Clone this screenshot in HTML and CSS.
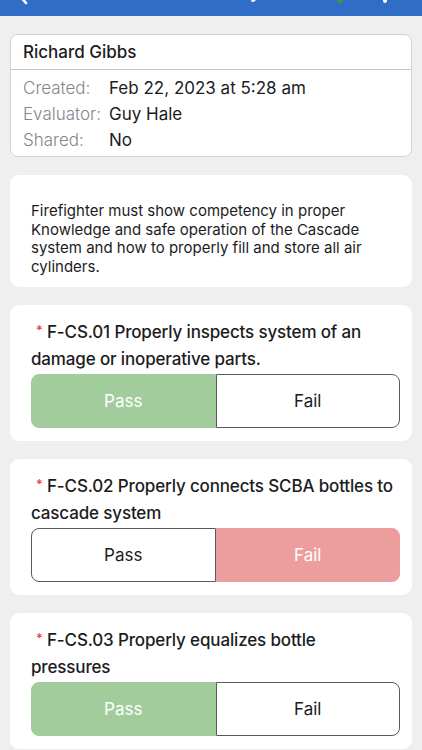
FILE: index.html
```html
<!DOCTYPE html>
<html lang="en">
<head>
<meta charset="utf-8">
<title>Evaluation</title>
<link rel="stylesheet" href="styles.css">
</head>
<body>
<header class="topbar">
  <div class="topbar-inner">
    <svg class="back" width="12" height="22" viewBox="0 0 12 22"><path d="M10 2 L2 11 L10 20" fill="none" stroke="#fff" stroke-width="2.6" stroke-linecap="round" stroke-linejoin="round"/></svg>
    <span class="title">Survey</span>
    <svg class="check" width="16" height="18" viewBox="0 0 16 18"><path d="M8 1 L15 9 L8 17 L1 9 Z" fill="#3f9a3a"/></svg>
    <svg class="more" width="6" height="22" viewBox="0 0 6 22"><circle cx="3" cy="3" r="2" fill="#fff"/><circle cx="3" cy="11" r="2" fill="#fff"/><circle cx="3" cy="19" r="2" fill="#fff"/></svg>
  </div>
</header>

<main class="content">
  <section class="card info-card">
    <div class="info-name">Richard Gibbs</div>
    <div class="info-rows">
      <div class="info-row"><span class="info-label">Created:</span><span class="info-value">Feb 22, 2023 at 5:28 am</span></div>
      <div class="info-row"><span class="info-label">Evaluator:</span><span class="info-value">Guy Hale</span></div>
      <div class="info-row"><span class="info-label">Shared:</span><span class="info-value">No</span></div>
    </div>
  </section>

  <section class="card desc-card">
    <p class="desc">Firefighter must show competency in proper Knowledge and safe operation of the Cascade system and how to properly fill and store all air cylinders.</p>
  </section>

  <section class="card q-card">
    <p class="question"><span class="req">*</span>F-CS.01 Properly inspects system of an damage or inoperative parts.</p>
    <div class="segment">
      <div class="seg seg-pass is-selected">Pass</div>
      <div class="seg seg-fail">Fail</div>
    </div>
  </section>

  <section class="card q-card">
    <p class="question"><span class="req">*</span>F-CS.02 Properly connects SCBA bottles to cascade system</p>
    <div class="segment">
      <div class="seg seg-pass">Pass</div>
      <div class="seg seg-fail is-selected">Fail</div>
    </div>
  </section>

  <section class="card q-card">
    <p class="question"><span class="req">*</span>F-CS.03 Properly equalizes bottle pressures</p>
    <div class="segment">
      <div class="seg seg-pass is-selected">Pass</div>
      <div class="seg seg-fail">Fail</div>
    </div>
  </section>
</main>
<div class="bottombar"></div>
</body>
</html>
```

FILE: styles.css
```css
* { box-sizing: border-box; }

html, body {
  margin: 0;
  padding: 0;
  background: #efeff0;
  font-family: Inter, "Noto Sans", "Liberation Sans", sans-serif;
  color: #1c1c1e;
}

body { overflow: hidden; }

.topbar {
  height: 16px;
  background: #2f6dc6;
  overflow: hidden;
}

.topbar-inner {
  height: 16px;
  display: flex;
  align-items: flex-end;
  padding: 0 34px 11px 16px;
}

.back { flex: none; }

.title {
  flex: none;
  margin-left: 174px;
  color: #fff;
  font-size: 17px;
  font-weight: 600;
  line-height: 20px;
  transform: translateY(-3px);
}

.check {
  flex: none;
  margin-left: auto;
}

.more {
  flex: none;
  margin-left: 34px;
  transform: translateY(-1px);
}

.content {
  display: flex;
  flex-direction: column;
  gap: 18px;
  padding: 18px 10px 0;
}

.card {
  background: #fff;
  border-radius: 9px;
}

.info-card {
  border: 1px solid #d3d3d6;
  border-radius: 8px;
}

.info-name {
  height: 35px;
  display: flex;
  align-items: center;
  padding: 0 12px;
  font-size: 17px;
  font-weight: 500;
  border-bottom: 1px solid #c4c4c6;
}

.info-rows {
  padding: 5px 12px 3px;
}

.info-row {
  display: flex;
  height: 26px;
  align-items: center;
  font-size: 17px;
}

.info-label {
  width: 86px;
  flex: none;
  color: #86868a;
  font-weight: 300;
}

.info-value {
  color: #1c1c1e;
  font-weight: 400;
}

.desc-card {
  padding: 27px 21px 11px;
}

.desc {
  margin: 0;
  font-size: 15px;
  line-height: 18.5px;
  color: #1c1c1e;
}

.q-card {
  padding: 14px 12px 13px 21px;
}

.question {
  margin: 0 0 1px;
  padding-right: 4px;
  font-size: 17px;
  font-weight: 500;
  line-height: 27px;
  letter-spacing: -0.15px;
}

.req {
  display: inline-block;
  width: 16px;
  padding-left: 5px;
  color: #e8413b;
  font-size: 13px;
  line-height: 13px;
  vertical-align: 3px;
  font-weight: 500;
}

.segment {
  display: flex;
  height: 54px;
}

.seg {
  flex: 1;
  display: flex;
  align-items: center;
  justify-content: center;
  font-size: 17px;
  color: #1c1c1e;
  background: #fff;
  border: 1px solid #5a5a5c;
}

.seg-pass { border-radius: 8px 0 0 8px; }
.seg-fail { border-radius: 0 8px 8px 0; }

.seg-pass.is-selected {
  background: #a3cc9d;
  border-color: #a3cc9d;
  color: #fff;
}

.seg-fail.is-selected {
  background: #eb9e9d;
  border-color: #eb9e9d;
  color: #fff;
}

.bottombar {
  margin-top: 2px;
  height: 20px;
  background: #3e75c3;
}
```
